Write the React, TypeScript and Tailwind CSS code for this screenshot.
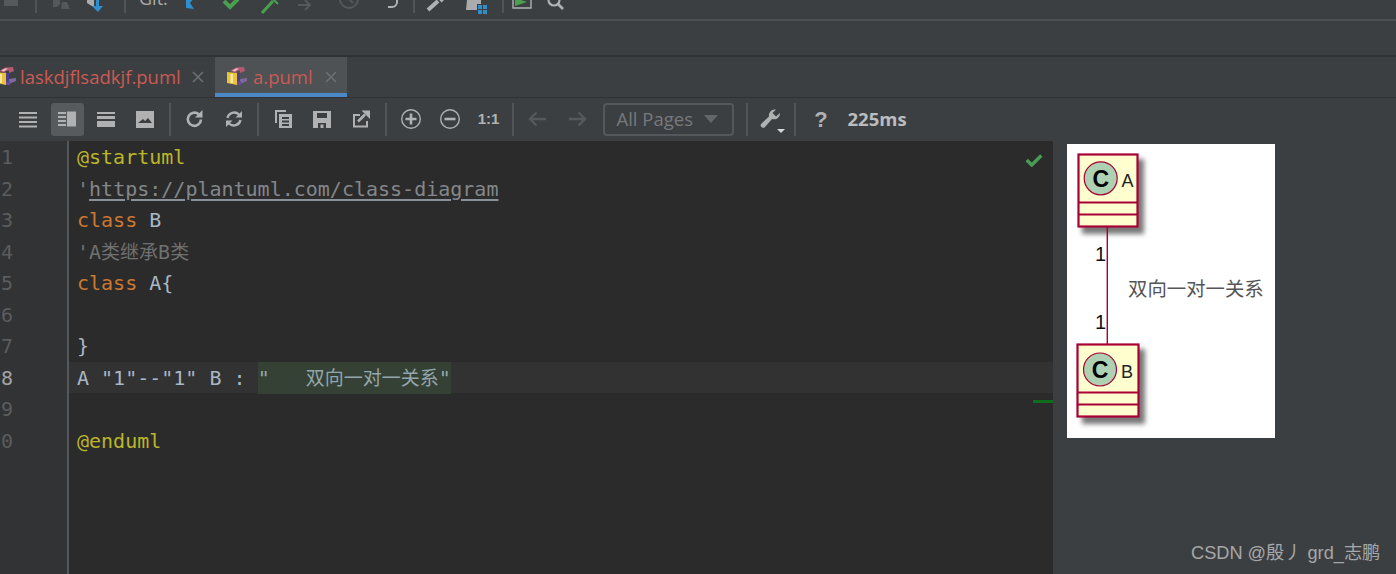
import React from "react";

const TopIcon = ({ children, cls }: { children: React.ReactNode; cls: string }) => (
  <svg viewBox="0 0 24 20" className={`w-6 h-5 shrink-0 ${cls}`}>{children}</svg>
);
const TopSep = ({ cls }: { cls: string }) => <div className={`w-[2px] h-[13px] bg-[#515355] shrink-0 ${cls}`} />;

const G = "#afb1b3";

const ToolBtn = ({ children, active }: { children: React.ReactNode; active?: boolean }) => (
  <div className="w-[39px] h-[33px] flex items-center justify-center shrink-0">
    <div className={`w-[33px] h-[33px] rounded-[3px] flex items-center justify-center ${active ? "bg-[#575b5e]" : ""}`}>
      <svg viewBox="0 0 20 20" className="w-5 h-5">{children}</svg>
    </div>
  </div>
);
const Sep = () => (
  <div className="w-[10.500px] h-[33px] flex justify-center shrink-0">
    <div className="w-[2px] h-full bg-[#515355]" />
  </div>
);

const PumlIcon = () => (
  <svg viewBox="0 0 22 22" className="w-[22px] h-[22px] shrink-0">
    <path d="M1 6 L11 7 L11 19 L1 17Z" fill="#e8c43c" />
    <path d="M4.500 8 h2.500 v9 h-2.500Z" fill="#f6e6a0" />
    <path d="M4 5 L10 1.500 L18 1 L19 5 L14 7 L14 4.500 L10 5 L11 7Z" fill="#b65a72" />
    <path d="M6 4.500 L10 2.500 L13 2.500 L9 5.500Z" fill="#e3c2c6" />
    <path d="M11 7 L14 7 L14 15 L11 19Z" fill="#4f3a8c" />
    <path d="M14 13 L21 12 L21 15 L14 18Z" fill="#7d6a9c" />
    <path d="M11 16 L15 15 L15 19 L11 19Z" fill="#6a4a9a" />
  </svg>
);

const CloseX = () => (
  <svg viewBox="0 0 12 12" className="w-3 h-3 shrink-0">
    <path d="M1 1 L11 11 M11 1 L1 11" stroke="#6e7173" strokeWidth="1.5" />
  </svg>
);

const cjk = "text-[19px] leading-none [font-family:'Noto_Sans_CJK_SC',sans-serif]";

const lines: React.ReactNode[] = [
  <span className="text-[#bbb529]">@startuml</span>,
  <span className="text-[#808080]">'<span className="underline underline-offset-[3px] decoration-[#8a9199] text-[#83878a]">https://plantuml.com/class-diagram</span></span>,
  <span><span className="text-[#cc7832]">class</span> <span className="text-[#a9b7c6]">B</span></span>,
  <span className="text-[#707070]">'A<span className={cjk}>类继承</span>B<span className={cjk}>类</span></span>,
  <span><span className="text-[#cc7832]">class</span> <span className="text-[#a9b7c6]">A{"{"}</span></span>,
  <span> </span>,
  <span className="text-[#a9b7c6]">{"}"}</span>,
  <span className="text-[#a9b7c6]">A "1"--"1" B : <span className="bg-[#344134] inline-block h-[32px] w-[193px] align-top leading-[33.500px] text-[#94a6ad]">"   <span className={cjk}>双向一对一关系</span>"</span></span>,
  <span> </span>,
  <span className="text-[#bbb529]">@enduml</span>,
];

const Diagram = () => (
  <svg viewBox="0 0 208 294" className="w-[208px] h-[294px] block">
    <defs>
      <filter id="s" x="-30%" y="-30%" width="160%" height="160%">
        <feGaussianBlur stdDeviation="2.500" />
      </filter>
    </defs>
    <rect x="15" y="15" width="62" height="75" fill="#777" filter="url(#s)" />
    <rect x="15" y="205" width="63" height="75" fill="#777" filter="url(#s)" />
    <rect x="11.500" y="10.500" width="59" height="72" fill="#fefece" stroke="#a80036" strokeWidth="2.200" />
    <path d="M11 58.500 H70 M11 70.500 H70" stroke="#a80036" strokeWidth="1.800" />
    <circle cx="33.700" cy="34.300" r="16.500" fill="#add1b2" stroke="#a80036" strokeWidth="1.200" />
    <text x="33.700" y="42.500" textAnchor="middle" fontFamily="Liberation Sans" fontWeight="700" fontSize="23" fill="#000">C</text>
    <text x="54.500" y="42.500" fontFamily="Liberation Sans" fontSize="18" fill="#222">A</text>
    <path d="M40.300 83 V200" stroke="#a80036" strokeWidth="1.400" />
    <text x="28" y="117" fontFamily="Liberation Sans" fontSize="20" fill="#111">1</text>
    <text x="28" y="185" fontFamily="Liberation Sans" fontSize="20" fill="#111">1</text>
    <text x="61" y="151.500" fontFamily="Noto Sans CJK SC" fontSize="19.400" fill="#555">双向一对一关系</text>
    <rect x="10.500" y="200.500" width="61" height="72" fill="#fefece" stroke="#a80036" strokeWidth="2.200" />
    <path d="M10.500 248.500 H71 M10.500 260.500 H71" stroke="#a80036" strokeWidth="1.800" />
    <circle cx="33" cy="225.500" r="16.500" fill="#add1b2" stroke="#a80036" strokeWidth="1.200" />
    <text x="33" y="233.500" textAnchor="middle" fontFamily="Liberation Sans" fontWeight="700" fontSize="23" fill="#000">C</text>
    <text x="54" y="233.500" fontFamily="Liberation Sans" fontSize="18" fill="#222">B</text>
  </svg>
);

export default function App() {
  return (
    <div className="relative w-[1396px] h-[574px] overflow-hidden bg-[#3c3f41] flex flex-col [font-family:'Open_Sans',sans-serif]">
      {/* top toolbar, cut by the window edge */}
      <div className="h-[19px] flex items-start shrink-0 overflow-hidden">
        <TopIcon cls="ml-[-1px]"><rect x="5" y="-4" width="14" height="10" fill="#56595b" /></TopIcon>
        <TopSep cls="ml-[12px]" />
        <TopIcon cls="ml-[13px]"><path d="M3 0 h7 v4 l-3 3 h-4Z M12 2 l5 0 l3 7 h-9Z" fill="#55585a" /></TopIcon>
        <TopIcon cls="ml-[11px]"><path d="M2 0 h7 v7 l-4 -2 l-3 -2Z" fill="#a9abad" /><path d="M11 0 h3 v6 h4 l-5 6 l-6 -6 h4Z" fill="#2f8fce" /></TopIcon>
        <TopSep cls="ml-[15px]" />
        <div className="ml-[13px] w-[30px] h-[19px] relative shrink-0 overflow-hidden">
          <span className="absolute left-0 top-[-13px] text-[18px] leading-[22px] text-[#a9abad]">Git:</span>
        </div>
        <TopIcon cls="ml-[9px]"><path d="M8 -2 h8 l-4 5 l4 6 l-8 -1Z" fill="#2f8fce" /></TopIcon>
        <TopIcon cls="ml-[17px]"><path d="M5 1 l6 6 l8 -8" fill="none" stroke="#4aa04f" strokeWidth="4" /></TopIcon>
        <TopIcon cls="ml-[15px]"><path d="M4 13 L15 1" stroke="#4aa04f" strokeWidth="3" /><path d="M15 -1 l5 5" stroke="#4aa04f" strokeWidth="2" /></TopIcon>
        <TopIcon cls="ml-[11px]"><path d="M5 5 h11 M12 0 l5 5 l-5 5" fill="none" stroke="#56595b" strokeWidth="2" /></TopIcon>
        <TopIcon cls="ml-[20px]"><circle cx="12" cy="-1" r="9" fill="none" stroke="#56595b" strokeWidth="2" /><path d="M12 -1 l4 4" stroke="#56595b" strokeWidth="2" /></TopIcon>
        <TopIcon cls="ml-[19px]"><path d="M17 -1 v3 a5 5 0 0 1 -5 5 h-4" fill="none" stroke="#afb1b3" strokeWidth="2" /></TopIcon>
        <TopSep cls="ml-[9px]" />
        <TopIcon cls="ml-[9px]"><path d="M4 10 L14 1 M16 -2 l3 3" stroke="#afb1b3" strokeWidth="4" /></TopIcon>
        <TopIcon cls="ml-[18px]"><path d="M1 0 h14 v4 h-4 v6 h-11Z" fill="#a9abad" /><path d="M12 5 h4 v4 h-4Z M17 5 h4 v4 h-4Z M12 10 h4 v4 h-4Z M17 10 h4 v4 h-4Z" fill="#2f8fce" /></TopIcon>
        <TopSep cls="ml-[12px]" />
        <TopIcon cls="ml-[6px]"><path d="M3 -2 V8 H21 V-2" fill="none" stroke="#afb1b3" strokeWidth="1.400" /><path d="M5 -2 L17 2 L5 6Z" fill="#4aa04f" /></TopIcon>
        <TopIcon cls="ml-[10px]"><circle cx="10" cy="0" r="5.500" fill="none" stroke="#afb1b3" strokeWidth="2.200" /><path d="M14 4 L19 9" stroke="#afb1b3" strokeWidth="2.600" /></TopIcon>
      </div>
      <div className="h-[2px] bg-[#4d4f51] shrink-0" />
      <div className="h-[34px] shrink-0" />
      <div className="h-[2px] bg-[#2f3132] shrink-0" />

      {/* tabs */}
      <div className="h-[40px] flex shrink-0 text-[#cb5a54] text-[18.500px]">
        <div className="w-[215px] ml-[-4px] shrink-0 flex items-center pb-[1px]">
          <div className="ml-[-1px]"><PumlIcon /></div>
          <span className="ml-[3px] whitespace-nowrap">laskdjflsadkjf.puml</span>
          <div className="ml-[11px]"><CloseX /></div>
        </div>
        <div className="w-[132px] ml-[4px] shrink-0 bg-[#4e5254] border-b-[4px] border-[#4a88c7] flex items-center pt-[3px]">
          <div className="ml-[11px]"><PumlIcon /></div>
          <span className="ml-[5px] whitespace-nowrap">a.puml</span>
          <div className="ml-[12px]"><CloseX /></div>
        </div>
      </div>
      <div className="h-[1px] bg-[#2f3132] shrink-0" />

      {/* preview toolbar */}
      <div className="h-[43px] flex items-center pl-[8.500px] pb-[1px] shrink-0">
        <ToolBtn><path d="M1 3h18v2H1zM1 7.500h18v2H1zM1 12h18v2H1zM1 16.500h18v2H1z" fill={G} /></ToolBtn>
        <ToolBtn active><path d="M1 3h8v2H1zM1 7h8v2H1zM1 11h8v2H1zM1 15h8v2H1z" fill={G} /><path d="M10 2.500h9v15h-9z" fill={G} /></ToolBtn>
        <ToolBtn><path d="M1 3h18v2H1zM1 7h18v3H1zM1 12h18v6H1z" fill={G} /></ToolBtn>
        <ToolBtn><path fillRule="evenodd" d="M1 2h18v17H1zM3 14h14l-4-5-3 3-2-2z" fill={G} /></ToolBtn>
        <Sep />
        <ToolBtn><path d="M16 10.500a6.600 6.600 0 1 1-2.200-5.200" fill="none" stroke={G} strokeWidth="2.600" /><path d="M17.500 1v7.500h-7.500z" fill={G} /></ToolBtn>
        <ToolBtn><path d="M3.500 9a6.800 6.800 0 0 1 11.500-3.500M16.500 11a6.800 6.800 0 0 1-11.500 3.500" fill="none" stroke={G} strokeWidth="2.400" /><path d="M18 2v6.500h-6.500zM2 18v-6.500h6.500z" fill={G} /></ToolBtn>
        <Sep />
        <ToolBtn><path d="M2 1h11v2H4v11H2z" fill={G} /><path fillRule="evenodd" d="M6 5h13v14H6zM9 8v2h7V8zM9 11.500v2h7v-2zM9 15v2h7v-2z" fill={G} /></ToolBtn>
        <ToolBtn><path fillRule="evenodd" d="M1 2h18v17H1zM5 4v5h10V4zM6 14v5h8v-5zM8.500 15.500h3V19h-3z" fill={G} /></ToolBtn>
        <ToolBtn><path d="M2 5h7v2H4v9.500h11V12h2v6.500H2z" fill={G} /><path d="M7 12.500 L14 5.500" stroke={G} strokeWidth="2.600" /><path d="M10.500 1.500H19V10z" fill={G} /></ToolBtn>
        <Sep />
        <ToolBtn><circle cx="10" cy="10" r="9.300" fill="none" stroke={G} strokeWidth="1.400" /><path d="M4.500 10h11M10 4.500v11" stroke={G} strokeWidth="2.600" /></ToolBtn>
        <ToolBtn><circle cx="10" cy="10" r="9.300" fill="none" stroke={G} strokeWidth="1.400" /><path d="M4.500 10h11" stroke={G} strokeWidth="2.600" /></ToolBtn>
        <div className="w-[39px] h-[33px] flex items-center justify-center shrink-0 text-[15px] font-bold text-[#afb1b3] [font-family:'Liberation_Sans',sans-serif]">1:1</div>
        <Sep />
        <ToolBtn><path d="M18 10H2M8.500 3.500L2 10l6.500 6.500" fill="none" stroke="#56595b" strokeWidth="2.400" /></ToolBtn>
        <ToolBtn><path d="M2 10h16M11.500 3.500L18 10l-6.500 6.500" fill="none" stroke="#56595b" strokeWidth="2.400" /></ToolBtn>
        <div className="ml-[6px] w-[131px] h-[33px] rounded-[4px] border-2 border-[#55585a] flex items-center pl-[12px] text-[18.500px] text-[#77797c] shrink-0">
          <span>All Pages</span>
          <svg viewBox="0 0 14 8" className="w-[14px] h-2 ml-[11px]"><path d="M0 0h14L7 8z" fill="#64676a" /></svg>
        </div>
        <div className="ml-[8px]"><Sep /></div>
        <div className="relative w-[38px] h-[33px] flex items-center justify-center shrink-0">
          <svg viewBox="0 0 24 24" className="w-[24px] h-[24px]"><path d="M21 6a6 6 0 0 1-8 6L6 20a2.400 2.400 0 0 1-3.500-3.500L10 9.500A6 6 0 0 1 17 2.500L13.500 6l3.500 3.500z" fill={G} /></svg>
          <svg viewBox="0 0 8 4" className="absolute left-[25px] bottom-[3px] w-2 h-1"><path d="M0 0h8L4 4z" fill="#d5d6d7" /></svg>
        </div>
        <Sep />
        <div className="w-[39px] text-center text-[22px] font-bold text-[#afb1b3] shrink-0 [font-family:'Liberation_Sans',sans-serif] ml-[1px]">?</div>
        <span className="ml-[7px] text-[18.500px] font-bold text-[#bbbcbd]">225ms</span>
      </div>

      {/* editor + preview */}
      <div className="flex flex-1 min-h-0">
        <div className="w-[67px] shrink-0 bg-[#313335] pt-[1px] text-[20px] leading-[31.500px] [font-family:'DejaVu_Sans_Mono',monospace] text-[#5a5d5f] pl-[1px]">
          {["1", "2", "3", "4", "5", "6", "7", "8", "9", "0"].map((n, i) => (
            <div key={i} className={i === 7 ? "text-[#a4a3a3]" : ""}>{n}</div>
          ))}
        </div>
        <div className="w-[2px] bg-[#555759] shrink-0" />
        <div className="relative w-[984px] shrink-0 bg-[#2b2b2b] pl-[8px] text-[20px] leading-[33.500px] [font-family:'DejaVu_Sans_Mono','Noto_Sans_CJK_SC',monospace] whitespace-pre">
          {lines.map((l, i) => (
            <div key={i} className={`h-[31.500px] ${i === 7 ? "bg-[#323232] -ml-[8px] pl-[8px]" : ""}`}>{l}</div>
          ))}
          <svg viewBox="0 0 16 12" className="absolute left-[956px] top-[12px] w-[18px] h-[14px]"><path d="M1.500 6 L6 10.500 L14.500 2" fill="none" stroke="#499c54" strokeWidth="3" /></svg>
          <div className="absolute left-[964px] top-[259px] w-[20px] h-[3px] bg-[#0f6e1e]" />
        </div>
        <div className="flex-1 pl-[14px] pt-[3px]">
          <div className="w-[208px] h-[294px] bg-white"><Diagram /></div>
        </div>
      </div>

      <div className="absolute left-[1191px] top-[541px] text-[18.200px] leading-[24px] text-[#a5a7a8] [font-family:'Liberation_Sans','Noto_Sans_CJK_SC',sans-serif] whitespace-nowrap">CSDN @殷丿 grd_志鹏</div>
    </div>
  );
}
